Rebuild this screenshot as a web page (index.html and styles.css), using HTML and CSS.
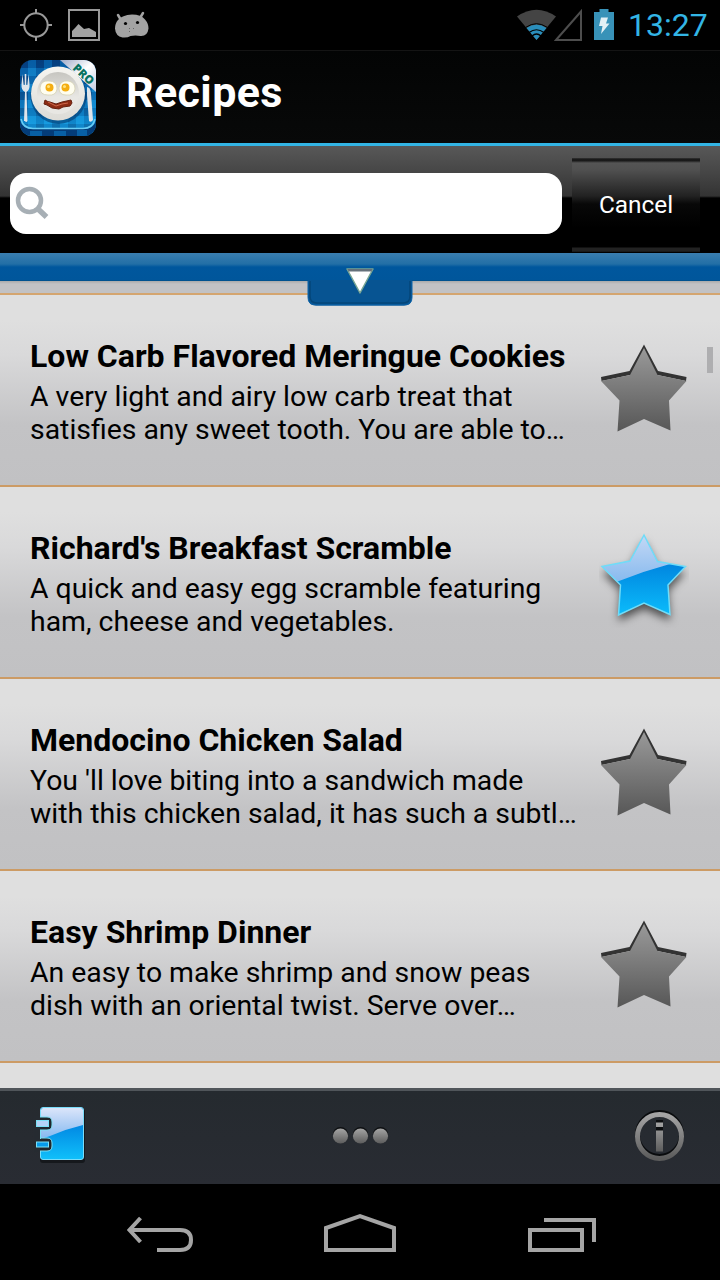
FILE: index.html
```html
<!DOCTYPE html>
<html lang="en">

<head>
    <meta charset="UTF-8">
    <meta name="viewport" content="width=device-width, initial-scale=1.0">
    <title>Recipes</title>
    <link rel="stylesheet" href="styles.css">
</head>

<body>
    <div class="screen">
        <!-- Status bar -->
        <div class="status-bar">
            <svg class="status-left" width="160" height="50" viewBox="0 0 160 50">
                <g fill="none" stroke="#999" stroke-width="2">
                    <circle cx="36" cy="25" r="11.7" />
                    <path d="M36 9v5M36 36v5M20 25h5M47 25h5" />
                    <rect x="69" y="10" width="30" height="30" />
                </g>
                <path d="M72 37v-6l3-3 3.500-4 5.500 5 5-1 7 4v5z" fill="#a3a3a3" />
                <path d="M118 20q4-5 14-5.500 9 0 13 5 3.500 4 3.500 9-1 8-8 7.500-5-1-10 0-3 2-8 1.500-7-1.500-7.500-9 0-5 3-8.500z" fill="#a3a3a3" />
                <path d="M118 15l3 5M143 13l-3 5" stroke="#a3a3a3" stroke-width="2.500" stroke-linecap="round" />
                <circle cx="125.500" cy="23.500" r="1.600" />
                <circle cx="137.500" cy="22.500" r="1.600" />
                <path d="M129.500 28v1M133.500 28v1M129.500 31v1" stroke="#666" />
            </svg>
            <svg class="status-right" width="108" height="50" viewBox="512 0 108 50">
                <path d="M536.500 40L517 16.500Q536.500 3 556 16.500z" fill="#444" />
                <path d="M536.500 40L526.500 28Q536.500 21 546.500 28z" fill="#2a8ebb" />
                <path d="M529 32.500Q536.500 27 544 32.500M532 36Q536.500 32 541 36" fill="none" stroke="#000" stroke-width="1.200" />
                <path d="M526 27.200Q536.500 20.200 547 27.200" fill="none" stroke="#000" stroke-width="1" />
                <path d="M556 40L581 11.500V40z" fill="none" stroke="#4d4d4d" stroke-width="2" />
                <path d="M599.500 9h9v3h5.500v28h-20V12h5.500z" fill="#3892b8" />
                <path d="M601 17.500h7l-2 6h3.500l-8.500 10.500 1.500-8h-3.500z" fill="#e2f0f5" />
            </svg>
            <span class="clock">13:27</span>
        </div>

        <!-- Title bar -->
        <div class="title-bar">
            <svg class="app-icon" width="76" height="76" viewBox="0 0 76 76">
                <defs>
                    <clipPath id="icon-shape"><rect width="76" height="76" rx="12" /></clipPath>
                    <pattern id="cloth" width="16" height="16" patternUnits="userSpaceOnUse">
                        <rect width="16" height="16" fill="#0962a9" />
                        <rect width="8" height="8" fill="#063875" />
                        <rect x="8" y="8" width="8" height="8" fill="#1588cf" />
                    </pattern>
                    <linearGradient id="cloth-light" x2="0" y2="1">
                        <stop offset="0" stop-color="#004c96" stop-opacity=".25" />
                        <stop offset=".85" stop-color="#19b4f5" stop-opacity=".45" />
                    </linearGradient>
                    <linearGradient id="plate" x2="0" y2="1">
                        <stop offset="0" stop-color="#f5f4f0" />
                        <stop offset="1" stop-color="#dddcd7" />
                    </linearGradient>
                    <linearGradient id="plate-inner" x2="0" y2="1">
                        <stop offset="0" stop-color="#c6c5c0" />
                        <stop offset=".6" stop-color="#e8e7e3" />
                    </linearGradient>
                    <linearGradient id="ribbon" x2="1" y2="1">
                        <stop offset="0" stop-color="#9eaac8" />
                        <stop offset=".5" stop-color="#fff" />
                        <stop offset="1" stop-color="#c3cadf" />
                    </linearGradient>
                </defs>
                <g clip-path="url(#icon-shape)">
                    <rect width="76" height="76" fill="url(#cloth)" />
                    <rect width="76" height="76" fill="url(#cloth-light)" />
                    <path d="M0 58q1 11 12 11h52q11 0 12-11v18H0z" fill="#043c78" />
                    <path d="M10 71h12v5H10zM34 71h12v5H34zM57 70h10v6H57z" fill="#0860a5" />
                    <path d="M1 59q2 9.500 12 9.500h50q10 0 12-9.500" fill="none" stroke="#69cdf5" stroke-width="1.500" />
                    <path d="M4 61l1-29q-4-2-3.500-8l1-10 1.200 11h1V14h1.600v11h1l1.200-11 1 10q.5 6-3 8l1 29q-1.500 2-2.500 0z" fill="#dfe5eb" />
                    <path d="M67 27q3 0 4 6l2 27q-2 3-4 1l-2-26z" fill="#dfe5eb" />
                    <ellipse cx="38.500" cy="36" rx="28" ry="28" fill="#033a70" opacity=".6" />
                    <circle cx="38" cy="33.500" r="27" fill="url(#plate)" />
                    <circle cx="38" cy="33" r="21" fill="url(#plate-inner)" />
                    <path d="M20 28q1-8 9-7 8 0 8 8-1 7-9 6-8 0-8-7zM39 28q1-8 9-7 7 1 7 8-1 7-9 6-7 0-7-7z" fill="#fffef0" stroke="#d5d2b4" stroke-width=".8" />
                    <circle cx="29.500" cy="27.500" r="4" fill="#f4ae12" />
                    <circle cx="45.500" cy="27.500" r="4" fill="#f4ae12" />
                    <circle cx="28.500" cy="26.500" r="1.500" fill="#ffe27a" />
                    <circle cx="44.500" cy="26.500" r="1.500" fill="#ffe27a" />
                    <path d="M25 40q3 2 5 2l6 2 6-2 9-2 1 3-2 3-7 1-4 2-7-1-5-3-3-1z" fill="#8d2b13" stroke="#66200f" />
                    <path d="M28 42l8 4 6-2 6-1" fill="none" stroke="#cf684a" />
                    <path d="M40 0h36v32z" fill="url(#ribbon)" />
                </g>
                <text class="ribbon-text" transform="translate(52 9) rotate(43)">PRO</text>
            </svg>
            <h1 class="title">Recipes</h1>
        </div>

        <!-- Search -->
        <div class="search-bar">
            <div class="search-field">
                <svg width="34" height="34" viewBox="0 0 34 34">
                    <circle cx="14.500" cy="14.500" r="11.500" fill="none" stroke="#a7afb5" stroke-width="4.500" />
                    <path d="M22 22l9.500 9" stroke="#a7afb5" stroke-width="5.500" />
                </svg>
            </div>
            <button class="cancel-btn">Cancel</button>
        </div>

        <div class="drawer-bar">
            <svg class="drawer-tab" width="106" height="27" viewBox="0 0 106 27">
                <path d="M1 0h104v17.500q0 8-8 8H9q-8 0-8-8z" fill="#075492" />
                <path d="M1 1v16.500q0 7.500 8 7.500h88q8 0 8-7.500V1" fill="none" stroke="#0b62a8" stroke-width="1" />
                <path d="M3 1v15q0 7 7 7h86q7 0 7-7V1" fill="none" stroke="#044679" stroke-width="1.500" />
            </svg>
            <svg class="drawer-arrow" width="30" height="28" viewBox="0 0 30 28">
                <path d="M2 2h26L15 26z" fill="#fff" stroke="#78a694" stroke-width="1.500" stroke-linejoin="round" />
                <path d="M2.500 2h25l-1 2.500h-23z" fill="#65717a" />
            </svg>
        </div>

        <!-- Recipe list -->
        <div class="recipe-list">
            <div class="row-end"></div>
            <div class="recipe">
                <div class="recipe-text">
                    <h2>Low Carb Flavored Meringue Cookies</h2>
                    <p>A very light and airy low carb treat that<br>satisfies any sweet tooth. You are able to…</p>
                </div>
                <svg class="star" width="90" height="96" viewBox="0 0 90 96">
                    <defs>
                        <linearGradient id="star-off" x2="0" y2="1">
                            <stop offset="0" stop-color="#999" />
                            <stop offset="1" stop-color="#575757" />
                        </linearGradient>
                    </defs>
                    <path d="M45 1.500L59 28 87.500 34 87 38 58.500 32 31 32 2.500 38 2 34 30.500 28z" fill="#333" />
                    <path d="M45 5L58.500 32 87.500 38 70 57.500 71.500 87.500 45 76 18.500 88.500 20.500 57.500 2 38 31 32z" fill="url(#star-off)" />
                </svg>
            </div>
            <div class="recipe">
                <div class="recipe-text">
                    <h2>Richard's Breakfast Scramble</h2>
                    <p>A quick and easy egg scramble featuring<br>ham, cheese and vegetables.</p>
                </div>
                <svg class="star star-active" width="90" height="96" viewBox="0 0 90 96">
                    <defs>
                        <linearGradient id="star-on" x2="0" y2="1">
                            <stop offset=".35" stop-color="#0085df" />
                            <stop offset="1" stop-color="#0bbcfb" />
                        </linearGradient>
                        <linearGradient id="star-gloss" x2="0" y2="1">
                            <stop offset="0" stop-color="#c7daf6" />
                            <stop offset="1" stop-color="#80b6ed" />
                        </linearGradient>
                        <clipPath id="star-clip"><path d="M45 3L58.500 29.500 86.500 34.500 69 53 71 82.500 45 71 19.500 83 21.500 53 3 34.500 31 29z" /></clipPath>
                    </defs>
                    <path class="star-shadow" d="M45 3L58.500 29.500 86.500 34.500 69 53 71 82.500 45 71 19.500 83 21.500 53 3 34.500 31 29z" fill="url(#star-on)" />
                    <path d="M0 0h90v28L71 32Q45 39 20 49L0 56z" fill="url(#star-gloss)" clip-path="url(#star-clip)" />
                    <path d="M45 3L58.500 29.500 86.500 34.500 69 53 71 82.500 45 71 19.500 83 21.500 53 3 34.500 31 29z" fill="none" stroke="#70dcf8" stroke-width="1.500" />
                </svg>
            </div>
            <div class="recipe">
                <div class="recipe-text">
                    <h2>Mendocino Chicken Salad</h2>
                    <p>You 'll love biting into a sandwich made<br>with this chicken salad, it has such a subtl…</p>
                </div>
                <svg class="star" width="90" height="96" viewBox="0 0 90 96">
                    <path d="M45 1.500L59 28 87.500 34 87 38 58.500 32 31 32 2.500 38 2 34 30.500 28z" fill="#333" />
                    <path d="M45 5L58.500 32 87.500 38 70 57.500 71.500 87.500 45 76 18.500 88.500 20.500 57.500 2 38 31 32z" fill="url(#star-off)" />
                </svg>
            </div>
            <div class="recipe">
                <div class="recipe-text">
                    <h2>Easy Shrimp Dinner</h2>
                    <p>An easy to make shrimp and snow peas<br>dish with an oriental twist. Serve over…</p>
                </div>
                <svg class="star" width="90" height="96" viewBox="0 0 90 96">
                    <path d="M45 1.500L59 28 87.500 34 87 38 58.500 32 31 32 2.500 38 2 34 30.500 28z" fill="#333" />
                    <path d="M45 5L58.500 32 87.500 38 70 57.500 71.500 87.500 45 76 18.500 88.500 20.500 57.500 2 38 31 32z" fill="url(#star-off)" />
                </svg>
            </div>
            <div class="scroll-thumb"></div>
        </div>

        <!-- Bottom tabs -->
        <div class="tab-bar">
            <svg width="54" height="62" viewBox="33 1105 54 62">
                <defs>
                    <linearGradient id="book-blue" x2="0" y2="1">
                        <stop offset=".3" stop-color="#0085e2" />
                        <stop offset="1" stop-color="#10c0fa" />
                    </linearGradient>
                    <linearGradient id="book-gloss" x2="0" y2="1">
                        <stop offset="0" stop-color="#dbe5fa" />
                        <stop offset="1" stop-color="#83b8f0" />
                    </linearGradient>
                </defs>
                <rect x="40" y="1109" width="45" height="54" rx="3" fill="#15181c" />
                <rect x="40.500" y="1107.500" width="43" height="52" rx="2.500" fill="url(#book-blue)" />
                <path d="M41 1110q0-2 2-2h38q2 0 2 2v15q-17 4-33 11l-9 3z" fill="url(#book-gloss)" />
                <rect x="40.500" y="1107.500" width="43" height="52" rx="2.500" fill="none" stroke="#79dcfa" />
                <path d="M38 1117h9q5 0 5 5v3q0 5-5 5h-9zM38 1138h9q5 0 5 5v3q0 5-5 5h-9z" fill="#20262b" stroke="#7be0f5" />
                <path d="M34 1116h6v36h-6z" fill="#262b31" />
                <path d="M40.500 1130v9" stroke="#7be0f5" />
                <rect x="36.500" y="1120.500" width="12" height="6" fill="#b5d2f5" stroke="#7be0f5" />
                <rect x="36.500" y="1142" width="12" height="5" fill="#079bea" stroke="#7be0f5" />
            </svg>
            <svg width="60" height="24" viewBox="0 0 60 24">
                <defs>
                    <linearGradient id="steel" x2="0" y2="1">
                        <stop offset="0" stop-color="#a5a5a5" />
                        <stop offset="1" stop-color="#5c5c5c" />
                    </linearGradient>
                </defs>
                <g fill="#0d0f11"><circle cx="10.500" cy="10.500" r="7.600" /><circle cx="30.500" cy="10.500" r="7.600" /><circle cx="50.500" cy="10.500" r="7.600" /></g>
                <g fill="url(#steel)"><circle cx="10.500" cy="12" r="7.600" /><circle cx="30.500" cy="12" r="7.600" /><circle cx="50.500" cy="12" r="7.600" /></g>
            </svg>
            <svg width="54" height="56" viewBox="0 0 54 56">
                <circle cx="26.500" cy="26.500" r="22" fill="none" stroke="#090b0d" stroke-width="5" />
                <circle cx="26.500" cy="28.500" r="22" fill="none" stroke="url(#steel)" stroke-width="5" />
                <path d="M23 12h7v8h-7zM23 20h7v3h-7z" fill="#0b0d0f" />
                <path d="M23 14.500h7v4.500h-7zM23 22.500h7v21h-7z" fill="url(#steel)" />
            </svg>
        </div>

        <!-- System navigation -->
        <div class="nav-bar">
            <svg width="520" height="90" viewBox="100 1190 520 90">
                <g fill="none" stroke="#a5a5a5" stroke-width="4">
                    <path d="M140.500 1218l-11 12 11 12M131 1230h49q11 0 11 10t-11 10h-23" />
                    <path d="M326 1250v-22l34-12 34 12v22z" />
                    <path d="M530 1230h52v20h-52zM544 1220h50v22" />
                </g>
            </svg>
        </div>
    </div>
</body>

</html>
```
FILE: styles.css
```css
* {
    box-sizing: border-box;
}

body {
    margin: 0;
    background-color: #000;
    font-family: Roboto, sans-serif;
}

svg {
    display: block;
    flex-shrink: 0;
}

.screen {
    width: 720px;
    height: 1280px;
    display: flex;
    flex-direction: column;
    overflow: hidden;
}

/* Status bar */
.status-bar {
    height: 50px;
    display: flex;
    align-items: center;
    justify-content: space-between;
    padding-right: 12px;
}

.status-right {
    margin-left: auto;
    margin-right: 8px;
}

.clock {
    width: 80px;
    font-size: 32px;
    color: #33b5e5;
    white-space: nowrap;
}

/* Title bar */
.title-bar {
    height: 96px;
    display: flex;
    align-items: center;
    gap: 30px;
    padding: 1px 20px 0;
    background: linear-gradient(#030404, #080909);
    border-top: 1px solid #141414;
    border-bottom: 3px solid #33b5e5;
}

.app-icon {
    overflow: visible;
}

.title {
    margin: 0;
    padding-bottom: 12px;
    color: #fff;
    font-size: 43px;
    font-weight: bold;
    letter-spacing: 0.4px;
}

.ribbon-text {
    font-family: "Open Sans", sans-serif;
    font-size: 11.5px;
    font-weight: 800;
    fill: #087361;
}

/* Search */
.search-bar {
    height: 107px;
    display: flex;
    align-items: flex-start;
    padding: 0 20px 0 10px;
    background: linear-gradient(#585858, #464646 26px, #333 50px, #000 52px);
}

.search-field {
    width: 552px;
    height: 61px;
    margin: 27px 10px 0 0;
    padding: 13px 5px;
    background-color: #fff;
    border-radius: 16px;
}

.cancel-btn {
    width: 128px;
    height: 94px;
    margin-top: 12px;
    padding: 0 0 2px;
    border: none;
    background: linear-gradient(#333 0, #111 2px, #222 3px, #555 5px, #505050 12px, #222 38px, #080808 46px, #000 70px, #000 89px, #222 90px, #222 93px, #111 94px);
    color: #fff;
    font-family: inherit;
    font-size: 24.4px;
}

.drawer-bar {
    position: relative;
    z-index: 1;
    height: 28px;
    background: linear-gradient(#3a7eb0, #226fa6 11px, #00579d 14px, #00569b 27px, #004d83);
}

.drawer-tab {
    position: absolute;
    left: 307px;
    top: 27px;
}

.drawer-arrow {
    position: absolute;
    left: 345px;
    top: 14px;
}

/* Recipe list */
.recipe-list {
    position: relative;
    height: 807px;
    background-color: #dfdfdf;
    overflow: hidden;
}

.row-end {
    height: 14px;
    background: linear-gradient(#aaa, #c2c2c4 3px);
    border-bottom: 2px solid #d4a56f;
}

.recipe {
    height: 192px;
    display: flex;
    justify-content: space-between;
    padding: 43px 31px 0 30px;
    background: linear-gradient(#dfdfdf 25px, #d9d9da 60px, #c3c3c5 130px, #c1c1c3);
    border-bottom: 2px solid #cc9b65;
}

.recipe-text {
    color: #000;
    white-space: nowrap;
}

.recipe h2 {
    margin: 0;
    font-size: 32px;
    line-height: 37px;
}

.recipe p {
    margin: 6px 0 0;
    font-size: 28.4px;
    line-height: 32.7px;
}

.star {
    margin-top: 5px;
}

.star-active {
    margin-top: 2px;
}

.star-shadow {
    filter: drop-shadow(0 6px 4px rgba(0, 0, 0, 0.6));
}

.scroll-thumb {
    position: absolute;
    right: 7px;
    top: 66px;
    width: 6px;
    height: 26px;
    background-color: #aeaeb0;
}

/* Bottom tabs */
.tab-bar {
    height: 96px;
    display: flex;
    align-items: center;
    justify-content: space-between;
    padding: 0 33px 4px;
    background: linear-gradient(#252a2f, #292c33);
    border-top: 3px solid #50555a;
}

/* System navigation */
.nav-bar {
    height: 96px;
    display: flex;
    justify-content: center;
    align-items: flex-end;
}
```
